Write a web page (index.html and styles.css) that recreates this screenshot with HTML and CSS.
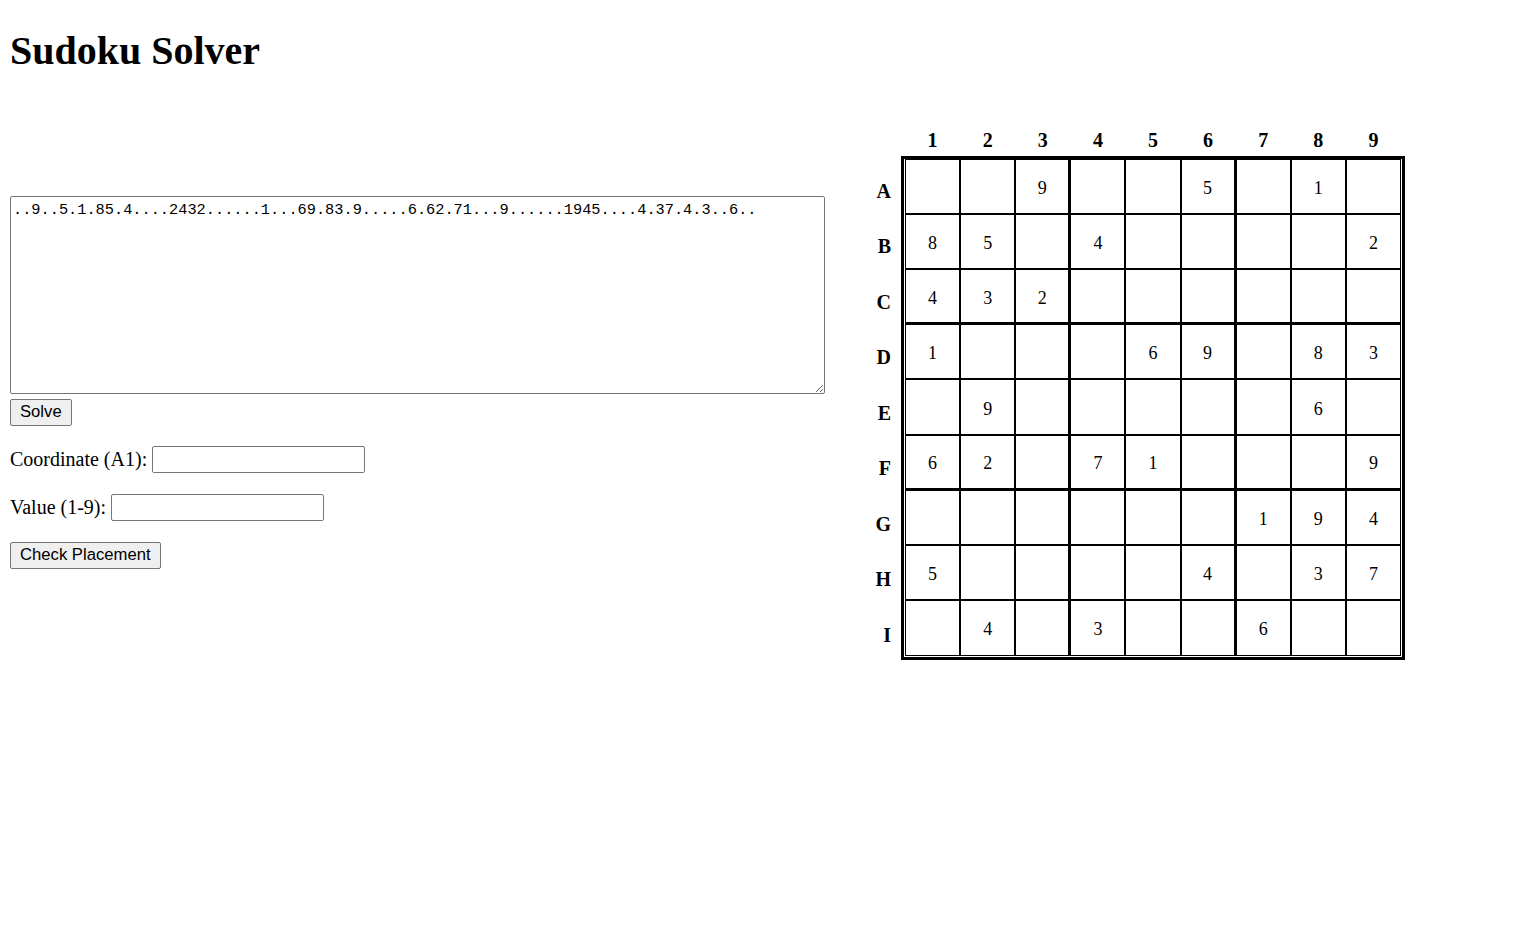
FILE: index.html
```html
<!DOCTYPE html>
<html lang="en">
<head>
<meta charset="utf-8">
<title>Sudoku Solver</title>
<link rel="stylesheet" href="styles.css">
</head>
<body>
<h1 class="title">Sudoku Solver</h1>
<div class="layout">
  <div class="forms">
    <form class="solve-form">
      <textarea class="puzzle-input" spellcheck="false">..9..5.1.85.4....2432......1...69.83.9.....6.62.71...9......1945....4.37.4.3..6..</textarea>
      <button type="button" class="btn">Solve</button>
    </form>
    <form class="check-form">
      <p class="checker"><label>Coordinate (A1):</label><input type="text" class="text-input"></p>
      <p class="checker"><label>Value (1-9):</label><input type="text" class="text-input"></p>
      <button type="button" class="btn">Check Placement</button>
    </form>
  </div>
  <div class="board">
    <div class="corner"></div>
    <div class="col-heads">
      <span>1</span><span>2</span><span>3</span><span>4</span><span>5</span><span>6</span><span>7</span><span>8</span><span>9</span>
    </div>
    <div class="row-heads">
      <span>A</span><span>B</span><span>C</span><span>D</span><span>E</span><span>F</span><span>G</span><span>H</span><span>I</span>
    </div>
    <div class="grid">
      <div class="cell"></div><div class="cell"></div><div class="cell">9</div><div class="cell"></div><div class="cell"></div><div class="cell">5</div><div class="cell"></div><div class="cell">1</div><div class="cell"></div>
      <div class="cell">8</div><div class="cell">5</div><div class="cell"></div><div class="cell">4</div><div class="cell"></div><div class="cell"></div><div class="cell"></div><div class="cell"></div><div class="cell">2</div>
      <div class="cell">4</div><div class="cell">3</div><div class="cell">2</div><div class="cell"></div><div class="cell"></div><div class="cell"></div><div class="cell"></div><div class="cell"></div><div class="cell"></div>
      <div class="cell">1</div><div class="cell"></div><div class="cell"></div><div class="cell"></div><div class="cell">6</div><div class="cell">9</div><div class="cell"></div><div class="cell">8</div><div class="cell">3</div>
      <div class="cell"></div><div class="cell">9</div><div class="cell"></div><div class="cell"></div><div class="cell"></div><div class="cell"></div><div class="cell"></div><div class="cell">6</div><div class="cell"></div>
      <div class="cell">6</div><div class="cell">2</div><div class="cell"></div><div class="cell">7</div><div class="cell">1</div><div class="cell"></div><div class="cell"></div><div class="cell"></div><div class="cell">9</div>
      <div class="cell"></div><div class="cell"></div><div class="cell"></div><div class="cell"></div><div class="cell"></div><div class="cell"></div><div class="cell">1</div><div class="cell">9</div><div class="cell">4</div>
      <div class="cell">5</div><div class="cell"></div><div class="cell"></div><div class="cell"></div><div class="cell"></div><div class="cell">4</div><div class="cell"></div><div class="cell">3</div><div class="cell">7</div>
      <div class="cell"></div><div class="cell">4</div><div class="cell"></div><div class="cell">3</div><div class="cell"></div><div class="cell"></div><div class="cell">6</div><div class="cell"></div><div class="cell"></div>
    </div>
  </div>
</div>
</body>
</html>
```
FILE: styles.css
```css
body {
  margin: 0 10px 10px;
  font-family: "Liberation Serif", "Times New Roman", serif;
  font-size: 20px;
  color: #000;
  background: #fff;
}

.title {
  font-size: 40px;
  font-weight: bold;
  margin: 0;
  padding: 26.8px 0;
}

.layout {
  display: flex;
  align-items: flex-start;
}

.forms {
  width: 816px;
  padding-top: 95px;
}

.solve-form,
.check-form {
  margin: 0;
}

.puzzle-input {
  display: block;
  box-sizing: border-box;
  width: 815px;
  height: 198px;
  margin: 0;
  padding: 4px 2px 2px;
  border: 1px solid #767676;
  border-radius: 2px;
  font-family: "Liberation Mono", "DejaVu Sans Mono", monospace;
  font-size: 15.3px;
  color: #000;
  resize: both;
}

.btn {
  display: block;
  margin: 5px 0 0;
  padding: 2.5px 9px;
  border: 1px solid #767676;
  border-radius: 2px;
  background: #efefef;
  color: #000;
  font-family: "Liberation Sans", Arial, sans-serif;
  font-size: 16.67px;
}

.check-form .btn {
  margin-top: 0;
}

.checker {
  display: flex;
  align-items: center;
  gap: 5px;
  height: 28px;
  margin: 20px 0;
}

.text-input {
  box-sizing: border-box;
  width: 213px;
  height: 27px;
  margin: 0;
  padding: 1px 2px;
  border: 1px solid #767676;
  border-radius: 2px;
  font-family: "Liberation Sans", Arial, sans-serif;
  font-size: 16.67px;
}

.board {
  display: grid;
  grid-template-columns: 30px 504px;
  column-gap: 10px;
  row-gap: 4px;
  margin-left: 35px;
  padding-top: 28px;
}

.col-heads {
  display: grid;
  grid-template-columns: repeat(9, 1fr);
  padding: 0 4px;
  font-weight: bold;
  text-align: center;
}

.row-heads {
  display: flex;
  flex-direction: column;
  padding-top: 8px;
  font-weight: bold;
}

.row-heads span {
  height: 55.5px;
  display: flex;
  align-items: center;
  justify-content: flex-end;
}

.grid {
  box-sizing: border-box;
  width: 504px;
  height: 504px;
  border: 3px solid #000;
  padding: 0 1px 1px;
  display: grid;
  grid-template-columns: repeat(9, 1fr);
  grid-template-rows: repeat(9, 1fr);
}

.cell {
  border: 1px solid #000;
  padding-top: 4px;
  display: flex;
  align-items: center;
  justify-content: center;
  font-size: 18px;
}

.cell:nth-child(9n+3),
.cell:nth-child(9n+6) {
  border-right-width: 2px;
}

.cell:nth-child(n+19):nth-child(-n+27),
.cell:nth-child(n+46):nth-child(-n+54) {
  border-bottom-width: 2px;
}
```
